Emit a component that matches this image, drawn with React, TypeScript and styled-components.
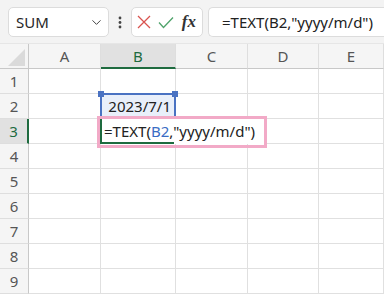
import React from 'react';
import styled, { createGlobalStyle } from 'styled-components';
import { ChevronDown } from 'lucide-react';

const GlobalStyle = createGlobalStyle`
  html, body { margin: 0; padding: 0; background: #fff; }
  body {
    font-family: "Noto Sans", "Liberation Sans", sans-serif;
    overflow: hidden;
  }
`;

const Page = styled.div`
  width: 384px;
  height: 295px;
  overflow: hidden;
  background: #fff;
`;

const Toolbar = styled.div`
  height: 44px;
  box-sizing: border-box;
  padding: 7px 0 0 8px;
  display: flex;
  align-items: flex-start;
  background: #f3f3f3;
  border-bottom: 1px solid #e6e6e6;
`;

const Box = styled.div`
  height: 30px;
  box-sizing: border-box;
  border: 1px solid #dcdcdc;
  border-radius: 5px;
  background: #fff;
  display: flex;
  align-items: center;
`;

const NameBox = styled(Box)`
  width: 101px;
  justify-content: space-between;
  padding: 0 4px 0 7px;
  font-size: 15px;
  color: #262626;
`;

const Kebab = styled.div`
  width: 22px;
  height: 30px;
  display: flex;
  align-items: center;
  justify-content: center;
`;

const FxBox = styled(Box)`
  width: 72px;
  padding: 0 5px 0 5px;
  justify-content: space-between;
`;

const FxLabel = styled.span`
  font-family: "Liberation Serif", "DejaVu Serif", serif;
  font-style: italic;
  font-weight: bold;
  font-size: 17px;
  color: #333;
  padding-right: 1px;
`;

const FormulaInput = styled(Box)`
  flex: 1;
  margin-left: 5px;
  border-right: none;
  border-radius: 5px 0 0 5px;
  padding-left: 13px;
  font-size: 15px;
  color: #222;
  white-space: nowrap;
`;

const Sheet = styled.div`
  position: relative;
  display: grid;
  grid-template-columns: 29px 72px 75px 72px 71px 1fr;
  grid-template-rows: 25px repeat(9, 25px);
`;

const Corner = styled.div`
  position: relative;
  background: #f5f5f5;
  border-right: 1px solid #c8c8c8;
  border-bottom: 1px solid #c8c8c8;
  &::after {
    content: '';
    position: absolute;
    right: 3px;
    bottom: 2px;
    width: 17px;
    height: 17px;
    background: #dadada;
    clip-path: polygon(100% 0, 100% 100%, 0 100%);
  }
`;

const ColHeader = styled.div<{ $active?: boolean }>`
  display: flex;
  align-items: center;
  justify-content: center;
  font-size: 15px;
  color: ${p => (p.$active ? '#1e6b3f' : '#555')};
  background: ${p => (p.$active ? '#e1e1e1' : '#f5f5f5')};
  border-right: 1px solid #dedede;
  border-bottom: ${p => (p.$active ? '2px solid #1e6b3f' : '1px solid #c8c8c8')};
`;

const RowHeader = styled.div<{ $active?: boolean }>`
  display: flex;
  align-items: center;
  justify-content: center;
  font-size: 15px;
  color: ${p => (p.$active ? '#1e6b3f' : '#555')};
  background: ${p => (p.$active ? '#e1e1e1' : '#f5f5f5')};
  border-right: ${p => (p.$active ? '2px solid #1e6b3f' : '1px solid #c8c8c8')};
  border-bottom: 1px solid #dedede;
`;

const Cell = styled.div<{ $ref?: boolean }>`
  display: flex;
  align-items: center;
  justify-content: flex-end;
  padding-right: 4px;
  font-size: 15px;
  color: #222;
  background: ${p => (p.$ref ? '#e9effa' : '#fff')};
  border-right: 1px solid #e0e0e0;
  border-bottom: 1px solid #e0e0e0;
  box-sizing: border-box;
`;

const RefFrame = styled.div`
  position: absolute;
  left: 100px;
  top: 49px;
  width: 76px;
  height: 26px;
  box-sizing: border-box;
  border: 2px solid #4a72c2;
  pointer-events: none;
`;

const Handle = styled.span<{ $side: 'left' | 'right' }>`
  position: absolute;
  top: -4px;
  ${p => (p.$side === 'left' ? 'left: -4px;' : 'right: -4px;')}
  width: 6px;
  height: 6px;
  background: #4a72c2;
`;

const Editor = styled.div`
  position: absolute;
  left: 100px;
  top: 74px;
  width: 164px;
  height: 26px;
  box-sizing: border-box;
  background: #fff;
  border-left: 2px solid #1e6b3f;
  display: flex;
  align-items: center;
  padding-left: 2px;
  font-size: 15px;
  color: #222;
  white-space: nowrap;
  &::after {
    content: '';
    position: absolute;
    left: -2px;
    bottom: 0;
    width: 74px;
    height: 2px;
    background: #1e6b3f;
  }
`;

const RefText = styled.span`
  color: #3a6cc4;
`;

const Annotation = styled.div`
  position: absolute;
  left: 97px;
  top: 72px;
  width: 170px;
  height: 32px;
  box-sizing: border-box;
  border: 3px solid #f2aac7;
  pointer-events: none;
`;

const columns = ['A', 'B', 'C', 'D', 'E'];
const rows = [1, 2, 3, 4, 5, 6, 7, 8, 9];

const App: React.FC = () => {
  return (
    <>
      <GlobalStyle />
      <Page>
        <Toolbar>
          <NameBox>
            <span>SUM</span>
            <ChevronDown size={15} strokeWidth={1.6} color="#444" />
          </NameBox>
          <Kebab>
            <svg width="4" height="13" viewBox="0 0 4 13">
              <circle cx="2" cy="2" r="1.4" fill="#444" />
              <circle cx="2" cy="6.5" r="1.4" fill="#444" />
              <circle cx="2" cy="11" r="1.4" fill="#444" />
            </svg>
          </Kebab>
          <FxBox>
            <svg width="14" height="14" viewBox="0 0 14 14">
              <path d="M1 1 L13 13 M13 1 L1 13" stroke="#d9534f" strokeWidth="1.3" fill="none" />
            </svg>
            <svg width="16" height="13" viewBox="0 0 16 13">
              <path d="M1 6.5 L5.5 11.5 L15 1.5" stroke="#4fa36b" strokeWidth="1.3" fill="none" />
            </svg>
            <FxLabel>fx</FxLabel>
          </FxBox>
          <FormulaInput>=TEXT(B2,"yyyy/m/d")</FormulaInput>
        </Toolbar>
        <Sheet>
          <Corner />
          {columns.map(c => (
            <ColHeader key={c} $active={c === 'B'}>{c}</ColHeader>
          ))}
          {rows.map(r => (
            <React.Fragment key={r}>
              <RowHeader $active={r === 3}>{r}</RowHeader>
              {columns.map(c => (
                <Cell key={c} $ref={r === 2 && c === 'B'}>
                  {r === 2 && c === 'B' ? '2023/7/1' : ''}
                </Cell>
              ))}
            </React.Fragment>
          ))}
          <RefFrame>
            <Handle $side="left" />
            <Handle $side="right" />
          </RefFrame>
          <Editor>
            =TEXT(<RefText>B2</RefText>,"yyyy/m/d")
          </Editor>
          <Annotation />
        </Sheet>
      </Page>
    </>
  );
};

export default App;
